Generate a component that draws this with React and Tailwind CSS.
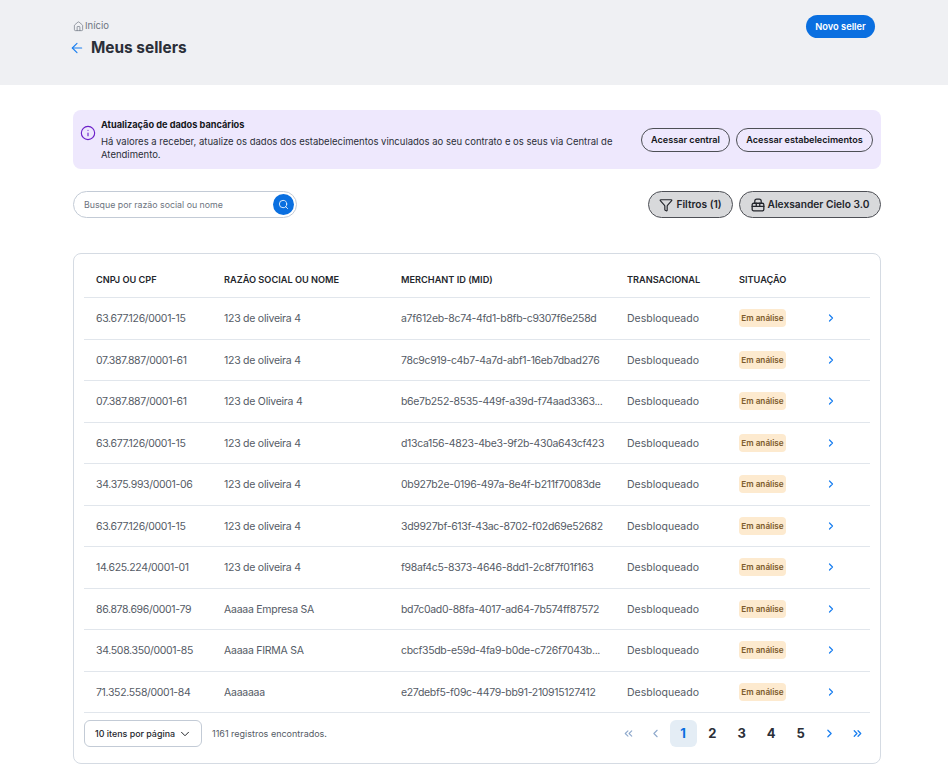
import React from "react";
import { ArrowLeft, ChevronRight, ChevronLeft, ChevronsLeft, ChevronsRight, ChevronDown, Home, Info, Search, Funnel } from "lucide-react";

const rows = [
  ["63.677.126/0001-15", "123 de oliveira 4", "a7f612eb-8c74-4fd1-b8fb-c9307f6e258d"],
  ["07.387.887/0001-61", "123 de oliveira 4", "78c9c919-c4b7-4a7d-abf1-16eb7dbad276"],
  ["07.387.887/0001-61", "123 de Oliveira 4", "b6e7b252-8535-449f-a39d-f74aad3363..."],
  ["63.677.126/0001-15", "123 de oliveira 4", "d13ca156-4823-4be3-9f2b-430a643cf423"],
  ["34.375.993/0001-06", "123 de oliveira 4", "0b927b2e-0196-497a-8e4f-b211f70083de"],
  ["63.677.126/0001-15", "123 de oliveira 4", "3d9927bf-613f-43ac-8702-f02d69e52682"],
  ["14.625.224/0001-01", "123 de oliveira 4", "f98af4c5-8373-4646-8dd1-2c8f7f01f163"],
  ["86.878.696/0001-79", "Aaaaa Empresa SA", "bd7c0ad0-88fa-4017-ad64-7b574ff87572"],
  ["34.508.350/0001-85", "Aaaaa FIRMA SA", "cbcf35db-e59d-4fa9-b0de-c726f7043b..."],
  ["71.352.558/0001-84", "Aaaaaaa", "e27debf5-f09c-4479-bb91-210915127412"],
];

const cols = "grid grid-cols-[128px_177px_226px_112px_86px_1fr] items-center pl-3";

function Basket() {
  return (
    <svg width="14" height="14" viewBox="0 0 24 24" fill="none" stroke="currentColor" strokeWidth="2.2" strokeLinecap="round" strokeLinejoin="round">
      <path d="M6.5 9V5.5A3.5 3.5 0 0 1 10 2h4a3.5 3.5 0 0 1 3.5 3.5V9" />
      <rect x="2" y="9" width="20" height="13" rx="2.5" />
      <path d="M2 14.5h20" />
      <path d="M9 9v5.5M15 9v5.5" />
    </svg>
  );
}

export default function App() {
  return (
    <div className="min-h-[769px] bg-white font-['Inter',sans-serif] text-[#2b2f38]">
      <header className="h-[85px] bg-[#eff0f3] pl-[69px] pr-[73px] pt-[15px] flex justify-between items-start">
        <div>
          <div className="flex items-center gap-[1px] pl-[4px] h-[22px] text-[9.5px] text-[#6d7480]">
            <Home size={11} strokeWidth={1.5} />
            <span>Início</span>
          </div>
          <div className="flex items-center gap-[6px] h-[21px]">
            <ArrowLeft size={16} strokeWidth={1.7} className="text-[#1a7ff0]" />
            <h1 className="text-[15.4px] font-bold text-[#2b2f38]">Meus sellers</h1>
          </div>
        </div>
        <button className="h-[23px] w-[69px] rounded-full bg-[#0a6fe0] text-white text-[9.3px] font-semibold">Novo seller</button>
      </header>

      <main className="pl-[73px] pr-[67px] pt-[25px]">
        <section className="h-[59px] rounded-lg bg-[#eee8fd] flex items-center justify-between pl-[7px] pr-2">
          <div className="flex items-start gap-[5px]">
            <Info size={16} strokeWidth={1.7} className="text-[#6b1fc9] mt-[7px] shrink-0" />
            <div className="w-[530px]">
              <div className="text-[9.2px] font-bold text-[#14161a] leading-[14px]">Atualização de dados bancários</div>
              <p className="text-[9.5px] text-[#2b2f38] leading-[13px] mt-[3px]">
                Há valores a receber, atualize os dados dos estabelecimentos vinculados ao seu contrato e os seus via Central de
                <br />
                Atendimento.
              </p>
            </div>
          </div>
          <div className="flex gap-[6px]">
            <button className="h-[24px] w-[89px] rounded-full border border-[#4d4f55] text-[9.1px] font-semibold text-[#14161a]">Acessar central</button>
            <button className="h-[24px] w-[137px] rounded-full border border-[#4d4f55] text-[9.1px] font-semibold text-[#14161a]">Acessar estabelecimentos</button>
          </div>
        </section>

        <section className="mt-[22px] flex items-center justify-between">
          <div className="h-[27px] w-[224px] rounded-full border border-[#c3cbd6] flex items-center justify-between pl-[10px] pr-[2px]">
            <span className="text-[8.8px] text-[#6d7480]">Busque por razão social ou nome</span>
            <span className="h-[21px] w-[21px] rounded-full bg-[#0a6fe0] flex items-center justify-center text-white">
              <Search size={11} strokeWidth={1.8} />
            </span>
          </div>
          <div className="flex gap-[6px]">
            <button className="h-[27px] w-[85px] rounded-full border border-[#4d4f55] bg-[#d8d9db] flex items-center justify-center gap-[3px] text-[10.2px] font-semibold text-[#23262c]">
              <Funnel size={14} strokeWidth={2} />Filtros (1)
            </button>
            <button className="h-[27px] w-[142px] rounded-full border border-[#4d4f55] bg-[#d8d9db] flex items-center justify-center gap-[3px] text-[10.2px] font-semibold text-[#23262c]">
              <Basket />Alexsander Cielo 3.0
            </button>
          </div>
        </section>

        <section className="mt-[35px] h-[511px] rounded-lg border border-[#d5dbe3] px-[10px]">
          <div className={`${cols} h-[44px] border-b border-[#e1e6ec] pt-[8px] text-[9.2px] font-semibold text-[#23262c]`}>
            <span>CNPJ OU CPF</span>
            <span>RAZÃO SOCIAL OU NOME</span>
            <span>MERCHANT ID (MID)</span>
            <span>TRANSACIONAL</span>
            <span>SITUAÇÃO</span>
            <span />
          </div>
          {rows.map((r) => (
            <div key={r[2]} className={`${cols} h-[41.5px] border-b border-[#e1e6ec] text-[10.5px] leading-[16px] text-[#555b66]`}>
              <span className="pt-[2px] tracking-[-0.33px]">{r[0]}</span>
              <span className="pt-[2px] tracking-[-0.25px]">{r[1]}</span>
              <span className="pt-[2px] tracking-[-0.33px]">{r[2]}</span>
              <span className="pt-[2px]">Desbloqueado</span>
              <span>
                <span className="inline-flex h-[18px] w-[47px] items-center justify-center rounded-[4px] bg-[#fdeacf] text-[8.2px] font-semibold text-[#7c5a2c]">Em análise</span>
              </span>
              <ChevronRight size={12} strokeWidth={2.4} className="text-[#1a7ff0]" />
            </div>
          ))}
          <div className="flex items-center justify-between h-[41px]">
            <div className="flex items-center gap-[10px]">
              <div className="h-[27px] w-[118px] rounded-md border border-[#c3cbd6] flex items-center justify-between pl-[10px] pr-[9px] text-[8.9px] font-medium text-[#23262c]">
                10 itens por página
                <ChevronDown size={14} strokeWidth={1.7} />
              </div>
              <span className="text-[9px] text-[#555b66]">1161 registros encontrados.</span>
            </div>
            <nav className="flex items-center mr-[-1px] text-[13px] font-bold text-[#2b2f38]">
              <span className="w-[27px] flex justify-center text-[#8fa9cc]"><ChevronsLeft size={13} strokeWidth={2} /></span>
              <span className="w-[27px] flex justify-center text-[#8fa9cc]"><ChevronLeft size={13} strokeWidth={2} /></span>
              <span className="w-[29px] flex justify-center"><span className="w-[27px] h-[27px] rounded-md bg-[#e4edf5] flex items-center justify-center text-[#0a6fe0]">1</span></span>
              <span className="w-[29.5px] flex justify-center">2</span>
              <span className="w-[29.5px] flex justify-center">3</span>
              <span className="w-[29.5px] flex justify-center">4</span>
              <span className="w-[29.5px] flex justify-center">5</span>
              <span className="w-[27.5px] flex justify-center text-[#1a7ff0]"><ChevronRight size={13} strokeWidth={2.4} /></span>
              <span className="w-[28px] flex justify-center text-[#1a7ff0]"><ChevronsRight size={13} strokeWidth={2.4} /></span>
            </nav>
          </div>
        </section>
      </main>
    </div>
  );
}
